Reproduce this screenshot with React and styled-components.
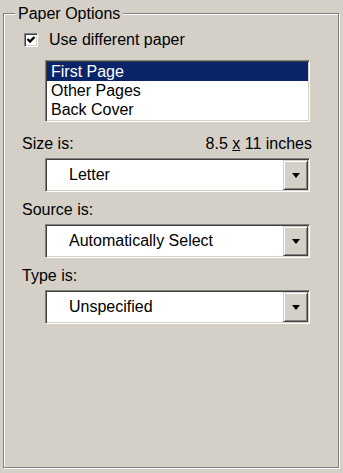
import React, { useState } from "react";
import styled, { createGlobalStyle } from "styled-components";

const GlobalStyle = createGlobalStyle`
  html, body {
    margin: 0;
    background-color: #d4d0c8;
    font-family: "Liberation Sans", Arial, sans-serif;
    font-size: 16px;
    color: #000;
  }
  #root {
    width: 343px;
    height: 473px;
  }
`;

const Page = styled.div`
  box-sizing: border-box;
  width: 343px;
  height: 473px;
  padding: 13px 0 0 3px;
  background-color: #d4d0c8;
`;

const GroupBox = styled.div`
  position: relative;
  box-sizing: border-box;
  width: 336px;
  height: 455px;
  padding: 17px 26px 0 18px;
  border: 1px solid #808080;
  box-shadow: inset 1px 1px 0 #fff, 1px 1px 0 #fff;
  display: flex;
  flex-direction: column;
`;

const Legend = styled.div`
  position: absolute;
  top: -9px;
  left: 11px;
  padding: 0 3px;
  line-height: 18px;
  background-color: #d4d0c8;
`;

const CheckRow = styled.label`
  display: flex;
  align-items: center;
  gap: 11px;
  height: 18px;
  line-height: 18px;
  margin-left: 2px;
  cursor: default;
`;

const CheckBox = styled.span`
  box-sizing: border-box;
  width: 14px;
  height: 14px;
  display: flex;
  align-items: center;
  justify-content: center;
  background-color: #fff;
  border-style: solid;
  border-width: 1px;
  border-color: #808080 #fff #fff #808080;
  box-shadow: inset 1px 1px 0 #404040, inset -1px -1px 0 #d4d0c8;
`;

const ListBox = styled.div`
  box-sizing: border-box;
  width: 265px;
  margin: 11px 0 0 23px;
  padding: 1px 1px 2px 1px;
  background-color: #fff;
  border-style: solid;
  border-width: 1px;
  border-color: #808080 #fff #fff #808080;
  box-shadow: inset 1px 1px 0 #404040, inset -1px -1px 0 #d4d0c8;
`;

const ListItem = styled.div`
  height: 19px;
  line-height: 19px;
  padding-left: 4px;
  background-color: ${(p) => (p.$selected ? "#0a246a" : "transparent")};
  color: ${(p) => (p.$selected ? "#fff" : "#000")};
  cursor: default;
`;

const Fields = styled.div`
  display: flex;
  flex-direction: column;
  gap: 9px;
  margin-top: 13px;
`;

const Field = styled.div`
  display: flex;
  flex-direction: column;
  gap: 5px;
`;

const LabelRow = styled.div`
  display: flex;
  justify-content: space-between;
  line-height: 18px;
`;

const Select = styled.div`
  box-sizing: border-box;
  width: 265px;
  height: 34px;
  margin-left: 23px;
  padding: 1px;
  display: flex;
  align-items: stretch;
  background-color: #fff;
  border-style: solid;
  border-width: 1px;
  border-color: #808080 #fff #fff #808080;
  box-shadow: inset 1px 1px 0 #404040, inset -1px -1px 0 #d4d0c8;
`;

const SelectValue = styled.div`
  flex: 1;
  display: flex;
  align-items: center;
  padding-left: 22px;
  line-height: 18px;
`;

const DropButton = styled.div`
  box-sizing: border-box;
  width: 25px;
  display: flex;
  align-items: center;
  justify-content: center;
  background-color: #d4d0c8;
  border-style: solid;
  border-width: 1px;
  border-color: #d4d0c8 #404040 #404040 #d4d0c8;
  box-shadow: inset 1px 1px 0 #fff, inset -1px -1px 0 #808080;
`;

const Arrow = () => (
  <svg width="8" height="5" viewBox="0 0 8 5">
    <polygon points="0,0 8,0 4,5" fill="#000" />
  </svg>
);

const Check = () => (
  <svg width="10" height="10" viewBox="0 0 10 10">
    <path d="M1.5 4 L4 6.5 L8.5 2" stroke="#000" strokeWidth="2.4" fill="none" />
  </svg>
);

const pages = ["First Page", "Other Pages", "Back Cover"];

const App = () => {
  const [selected, setSelected] = useState(0);

  return (
    <>
      <GlobalStyle />
      <Page>
        <GroupBox>
          <Legend>Paper Options</Legend>
          <CheckRow>
            <CheckBox>
              <Check />
            </CheckBox>
            Use different paper
          </CheckRow>

          <ListBox>
            {pages.map((p, i) => (
              <ListItem key={p} $selected={i === selected} onClick={() => setSelected(i)}>
                {p}
              </ListItem>
            ))}
          </ListBox>

          <Fields>
            <Field>
              <LabelRow>
                <span>Size is:</span>
                <span>
                  8.5 <u>x</u> 11 inches
                </span>
              </LabelRow>
              <Select>
                <SelectValue>Letter</SelectValue>
                <DropButton>
                  <Arrow />
                </DropButton>
              </Select>
            </Field>

            <Field>
              <LabelRow>
                <span>Source is:</span>
              </LabelRow>
              <Select>
                <SelectValue>Automatically Select</SelectValue>
                <DropButton>
                  <Arrow />
                </DropButton>
              </Select>
            </Field>

            <Field>
              <LabelRow>
                <span>Type is:</span>
              </LabelRow>
              <Select>
                <SelectValue>Unspecified</SelectValue>
                <DropButton>
                  <Arrow />
                </DropButton>
              </Select>
            </Field>
          </Fields>
        </GroupBox>
      </Page>
    </>
  );
};

export default App;
